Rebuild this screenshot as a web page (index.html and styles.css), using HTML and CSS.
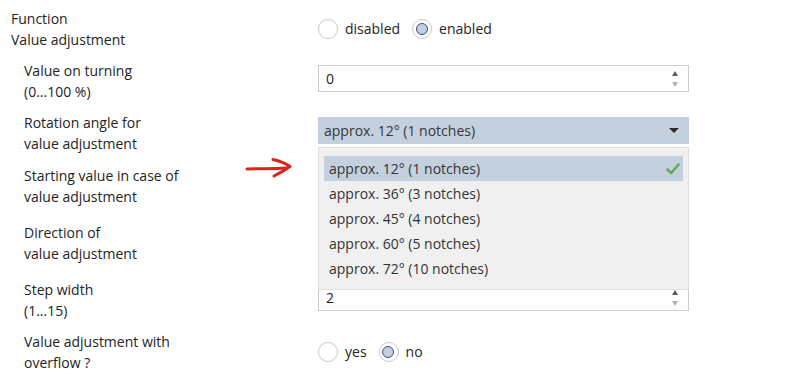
FILE: index.html
```html
<!DOCTYPE html>
<html lang="en">
<head>
  <meta charset="UTF-8" />
  <title>Value adjustment</title>
  <link rel="stylesheet" href="styles.css">
</head>
<body>
<div class="form">

  <div class="row">
    <div class="label">Function<br>Value adjustment</div>
    <div class="radios">
      <span class="radio"></span><span class="opt">disabled</span>
      <span class="radio checked"></span><span class="opt">enabled</span>
    </div>
  </div>

  <div class="row sub">
    <div class="label">Value on turning<br>(0...100 %)</div>
    <div class="spin">
      <span class="value">0</span>
      <span class="arrows"><i class="up"></i><i class="down"></i></span>
    </div>
  </div>

  <div class="row sub mid">
    <div class="label">Rotation angle for<br>value adjustment</div>
    <div class="combo-wrap">
      <div class="combo">
        <span>approx. 12° (1 notches)</span>
        <i class="caret"></i>
      </div>
      <ul class="popup">
        <li class="selected">approx. 12° (1 notches)
          <svg class="check" width="14" height="12" viewBox="0 0 14 12"><path d="M1.5 6.5 L5.2 10 L12.5 1.5" fill="none" stroke="#5fae55" stroke-width="2.6" stroke-linecap="round" stroke-linejoin="round"/></svg>
        </li>
        <li>approx. 36° (3 notches)</li>
        <li>approx. 45° (4 notches)</li>
        <li>approx. 60° (5 notches)</li>
        <li>approx. 72° (10 notches)</li>
      </ul>
    </div>
  </div>

  <div class="row sub tall">
    <div class="label">Starting value in case of<br>value adjustment</div>
    <div class="combo"><span></span></div>
  </div>

  <div class="row sub tall">
    <div class="label">Direction of<br>value adjustment</div>
    <div class="combo"><span></span></div>
  </div>

  <div class="row sub">
    <div class="label">Step width<br>(1...15)</div>
    <div class="spin">
      <span class="value">2</span>
      <span class="arrows"><i class="up"></i><i class="down"></i></span>
    </div>
  </div>

  <div class="row sub">
    <div class="label">Value adjustment with<br>overflow ?</div>
    <div class="radios">
      <span class="radio"></span><span class="opt">yes</span>
      <span class="radio checked"></span><span class="opt">no</span>
    </div>
  </div>

  <svg class="pointer" width="50" height="24" viewBox="0 0 50 24">
    <path d="M2 12 C14 11.5 28 11.8 42 11" fill="none" stroke="#e0201c" stroke-width="3" stroke-linecap="round"/>
    <path d="M28 2.5 C35 4 40 6 45 9.5 C40 13 35 16 29 19" fill="none" stroke="#e0201c" stroke-width="3" stroke-linecap="round" stroke-linejoin="round"/>
  </svg>
</div>
</body>
</html>
```

FILE: styles.css
```css
body {
  margin: 0;
  background-color: #ffffff;
  color: #242424;
  font-family: "Open Sans", "Noto Sans", sans-serif;
  font-size: 14px;
}

.form {
  position: relative;
  padding: 3px 0 0 11px;
}

.row {
  display: grid;
  grid-template-columns: 307px 371px;
  align-items: start;
  height: 42px;
  padding: 5px 0;
}

.row.mid {
  height: 43px;
}

.row.tall {
  height: 47px;
}

.label {
  line-height: 21px;
  white-space: nowrap;
}

.row.sub .label {
  padding-left: 13px;
}

.radios {
  display: flex;
  align-items: center;
  height: 20px;
  margin-top: 11px;
}

.radio {
  width: 18px;
  height: 18px;
  border: 1px solid #c9c9c9;
  border-radius: 50%;
  background: #fff;
  position: relative;
  box-sizing: content-box;
}

.radio.checked::after {
  content: "";
  position: absolute;
  left: 2.5px;
  top: 2.5px;
  width: 10px;
  height: 10px;
  border: 1.5px solid #2f5280;
  border-radius: 50%;
  background: #c3cfdd;
}

.opt {
  margin: 0 12px 0 7px;
  line-height: 20px;
}

.spin {
  display: flex;
  align-items: center;
  height: 25px;
  margin-top: 5px;
  border: 1px solid #cdcdcd;
  background: #fff;
  padding: 0 0 0 7px;
}

.spin .value {
  flex: 1;
}

.arrows {
  display: flex;
  flex-direction: column;
  gap: 6px;
  width: 20px;
  align-items: center;
  margin-right: 3px;
}

.arrows i {
  display: block;
  width: 0;
  height: 0;
  border-left: 3.5px solid transparent;
  border-right: 3.5px solid transparent;
}

.arrows .up {
  border-bottom: 5px solid #5a5a5a;
}

.arrows .down {
  border-top: 5px solid #b0b0b0;
}

.combo-wrap {
  position: relative;
  margin-top: 5px;
}

.combo {
  display: flex;
  align-items: center;
  height: 27px;
  padding: 0 0 0 6px;
  background: #c4d0de;
  color: #363636;
}

.row.tall .combo {
  margin-top: 5px;
  background: #f0f0f0;
}

.combo span {
  flex: 1;
}

.caret {
  width: 0;
  height: 0;
  border-left: 5px solid transparent;
  border-right: 5px solid transparent;
  border-top: 5px solid #2a2a2a;
  margin-right: 10px;
}

.popup {
  position: absolute;
  top: 30px;
  left: 0;
  right: 0;
  z-index: 5;
  margin: 0;
  list-style: none;
  background: #f0f0f0;
  border: 1px solid #dedede;
  padding: 8px 5px 8px 5px;
}

.popup li {
  position: relative;
  height: 25px;
  line-height: 26px;
  padding-left: 5px;
  color: #333;
}

.popup li.selected {
  background: #c4d0de;
}

.check {
  position: absolute;
  right: 3px;
  top: 7px;
}

.pointer {
  position: absolute;
  left: 245px;
  top: 157px;
}
```
